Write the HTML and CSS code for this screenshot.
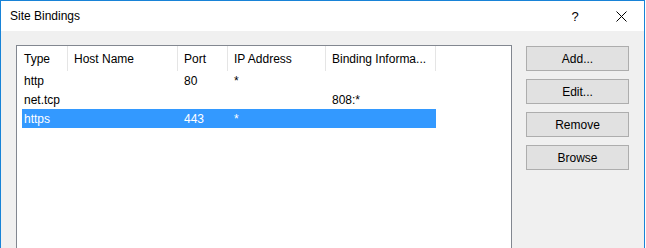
FILE: index.html
```html
<!DOCTYPE html>
<html lang="en">
<head>
    <meta charset="UTF-8">
    <title>Site Bindings</title>
    <link rel="stylesheet" href="styles.css">
</head>
<body>
    <div class="window">
        <div class="titlebar">
            <span class="title">Site Bindings</span>
            <span class="help">?</span>
            <span class="close">
                <svg width="11" height="11" viewBox="0 0 11 11">
                    <path d="M0.5 0.5 L10.5 10.5 M10.5 0.5 L0.5 10.5" stroke="#000" stroke-width="1" fill="none"/>
                </svg>
            </span>
        </div>
        <div class="content">
            <div class="listview">
                <div class="header">
                    <div class="col first">Type</div>
                    <div class="col">Host Name</div>
                    <div class="col">Port</div>
                    <div class="col">IP Address</div>
                    <div class="col">Binding Informa...</div>
                </div>
                <div class="row">
                    <div class="cell first">http</div>
                    <div class="cell"></div>
                    <div class="cell">80</div>
                    <div class="cell">*</div>
                    <div class="cell"></div>
                </div>
                <div class="row">
                    <div class="cell first">net.tcp</div>
                    <div class="cell"></div>
                    <div class="cell"></div>
                    <div class="cell"></div>
                    <div class="cell">808:*</div>
                </div>
                <div class="row selected">
                    <div class="cell first">https</div>
                    <div class="cell"></div>
                    <div class="cell">443</div>
                    <div class="cell">*</div>
                    <div class="cell"></div>
                </div>
            </div>
            <div class="buttons">
                <button class="btn">Add...</button>
                <button class="btn">Edit...</button>
                <button class="btn">Remove</button>
                <button class="btn">Browse</button>
            </div>
        </div>
    </div>
</body>
</html>
```

FILE: styles.css
```css
body, html {
    margin: 0;
    padding: 0;
    height: 100%;
    overflow: hidden;
    background: #ffffff;
}
.window {
    width: 645px;
    height: 248px;
    box-sizing: border-box;
    border-left: 1px solid #1883d7;
    border-right: 1px solid #1883d7;
    border-top: 1px solid #1883d7;
    font-family: "Liberation Sans", Arial, sans-serif;
    font-size: 12px;
    color: #000000;
    display: flex;
    flex-direction: column;
}
.titlebar {
    height: 30px;
    background: #ffffff;
    display: flex;
    align-items: center;
    padding-left: 9px;
}
.title {
    flex: 1;
}
.help {
    width: 46px;
    text-align: center;
    font-size: 13px;
}
.close {
    width: 46px;
    display: flex;
    justify-content: center;
}
.content {
    flex: 1;
    background: #f0f0f0;
    display: flex;
    padding: 14px 15px 0 15px;
    gap: 14px;
}
.listview {
    width: 496px;
    box-sizing: border-box;
    border: 1px solid #828790;
    border-bottom: none;
    background: #ffffff;
}
.header {
    display: grid;
    grid-template-columns: 51px 110px 50px 98px 110px;
    height: 25px;
}
.header .col {
    border-right: 1px solid #e5e5e5;
    padding-left: 6px;
    padding-top: 2px;
    line-height: 23px;
    white-space: nowrap;
    overflow: hidden;
}
.header .col.first {
    padding-left: 7px;
}
.row {
    display: grid;
    grid-template-columns: 46px 110px 50px 98px 110px;
    height: 19px;
    margin-left: 5px;
    width: 414px;
}
.cell {
    padding-left: 6px;
    padding-top: 1px;
    line-height: 18px;
    white-space: nowrap;
}
.cell.first {
    padding-left: 2px;
}
.row.selected {
    background: #3399ff;
    color: #ffffff;
}
.buttons {
    display: flex;
    flex-direction: column;
    gap: 8px;
    padding-top: 1px;
}
.btn {
    width: 103px;
    height: 25px;
    box-sizing: border-box;
    background: #e1e1e1;
    border: 1px solid #adadad;
    font-family: "Liberation Sans", Arial, sans-serif;
    font-size: 12px;
    color: #000000;
    padding: 1px 0 0 0;
}
```
